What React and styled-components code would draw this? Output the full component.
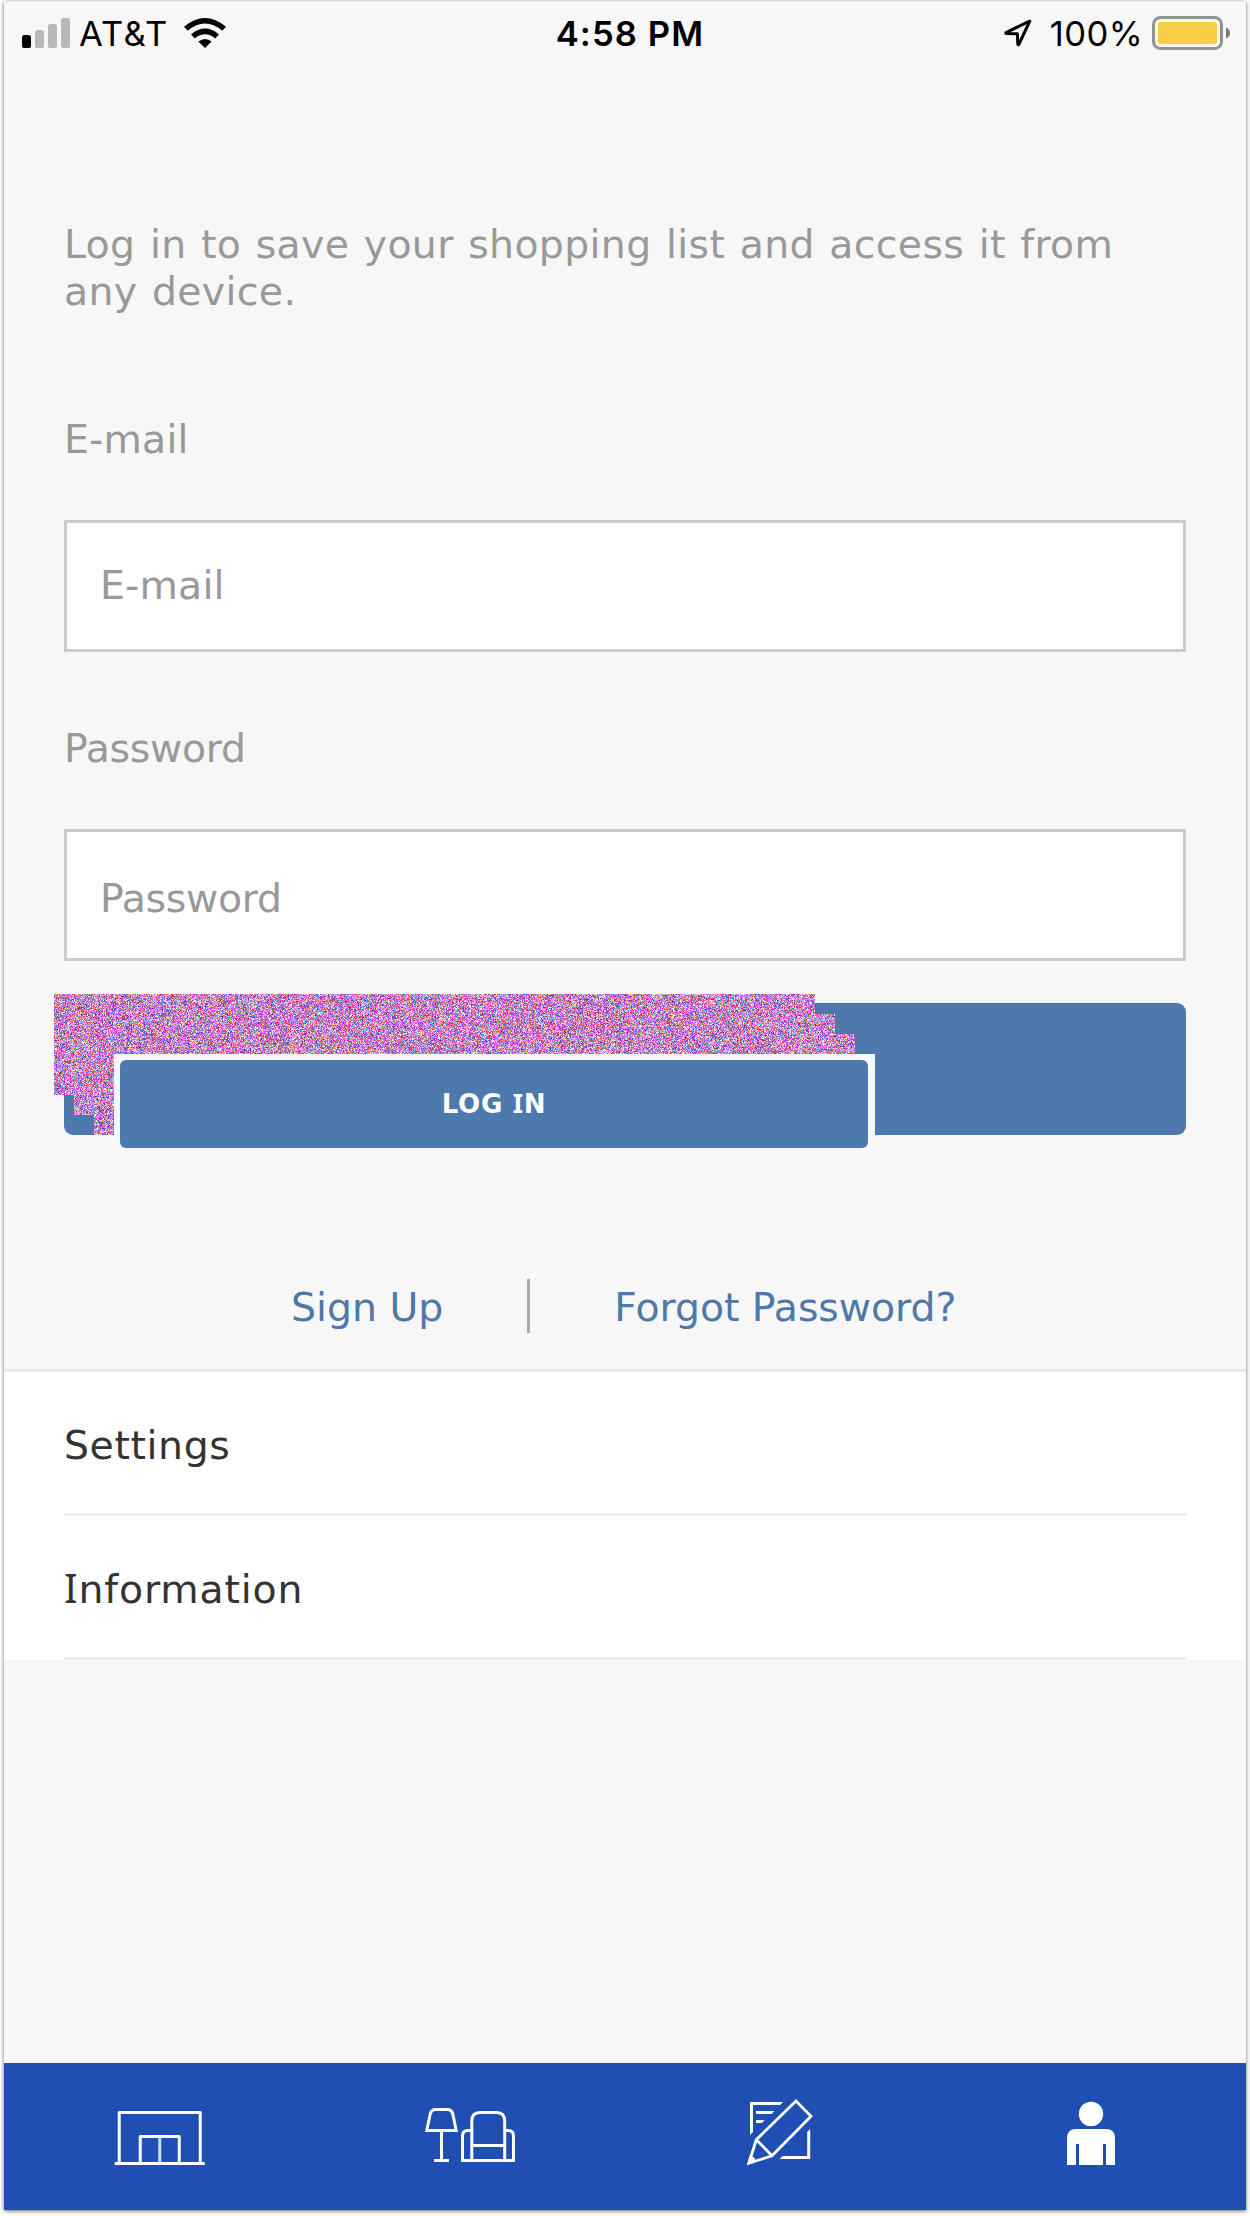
import React, { useEffect, useRef } from "react";
import styled, { createGlobalStyle } from "styled-components";

const GlobalStyle = createGlobalStyle`
  * { box-sizing: border-box; }
  body { margin: 0; background: #fff; }
`;

const sans = `"DejaVu Sans", Verdana, sans-serif`;
const system = `Inter, Roboto, sans-serif`;

const Page = styled.div`
  width: 1250px;
  height: 2216px;
  padding: 1px 4px 6px;
  overflow: hidden;
  background: #fff;
`;

const Screen = styled.main`
  display: flex;
  flex-direction: column;
  height: 2209px;
  background: #f7f7f7;
  border-top: 1px solid #ececec;
  box-shadow: 0 1px 4px rgba(0, 0, 0, 0.6);
  font-family: ${sans};
  font-size: 39.4px;
  line-height: 47px;
  color: #999;
  white-space: nowrap;
`;

const StatusBar = styled.header`
  display: grid;
  grid-template-columns: 1fr auto 1fr;
  align-items: center;
  height: 62px;
  padding: 0 16px 0 18px;
  font-family: ${system};
  font-size: 34.6px;
  line-height: 42px;
  color: #000;
`;

const StatusGroup = styled.div`
  display: flex;
  align-items: center;
  justify-content: ${(p) => (p.$end ? "flex-end" : "flex-start")};
`;

const Carrier = styled.span`
  margin: 0 15px 0 9px;
  letter-spacing: 1.2px;
`;

const Clock = styled.time`
  margin-left: 8px;
  font-weight: 600;
  letter-spacing: 1.1px;
`;

const Percent = styled.span`
  margin: 0 9px 0 18px;
  letter-spacing: 0.4px;
`;

const Form = styled.form`
  display: flex;
  flex-direction: column;
  height: 1305px;
  padding: 157px 60px 0;
`;

const Intro = styled.p`
  margin: 0 0 101px;
  letter-spacing: 0.35px;
  word-spacing: 1.6px;
`;

const Label = styled.label`
  height: 47px;
  margin-bottom: 57px;
  letter-spacing: ${(p) => p.$spacing}px;
`;

const Field = styled.div`
  display: flex;
  align-items: center;
  height: 132px;
  margin-bottom: ${(p) => p.$after}px;
  padding: ${(p) => p.$drop}px 33px ${(p) => p.$lift}px;
  border: 3px solid #ccc;
  background: #fff;
  letter-spacing: ${(p) => p.$spacing}px;
`;

const Submit = styled.div`
  position: relative;
  flex: none;
  height: 132px;
  border-radius: 9px;
  background: #4e79ad;
`;

const Grain = styled.canvas`
  position: absolute;
  left: -10px;
  top: -9px;
  width: 801px;
  height: 141px;
  clip-path: polygon(0 0, 761px 0, 761px 20px, 781px 20px, 781px 40px, 801px 40px,
    801px 60px, 60px 60px, 60px 141px, 40px 141px, 40px 121px, 20px 121px, 20px 101px, 0 101px);
`;

const Float = styled.div`
  position: absolute;
  left: 50px;
  top: 51px;
  width: 761px;
  height: 101px;
  padding: 6px 7px 7px 6px;
  background: #f7f8f9;
`;

const LoginButton = styled.button`
  display: block;
  width: 748px;
  height: 88px;
  padding: 0;
  border: 0;
  border-radius: 6px;
  background: #4e79ad;
  color: #fff;
  font: bold 26px/32px ${sans};
  letter-spacing: 0.7px;
`;

const SlabCapital = styled.span`
  font-family: "Noto Sans", sans-serif;
  font-size: 1.02em;
  line-height: 0;
`;

const Links = styled.nav`
  display: flex;
  align-items: center;
  height: 54px;
  margin-top: 144px;
  padding-left: 227px;
  color: #4f78aa;
`;

const Link = styled.a`
  padding-top: 2px;
  letter-spacing: ${(p) => p.$spacing}px;
`;

const Divider = styled.span`
  width: 3px;
  height: 54px;
  margin: 0 84px 0 84px;
  background: #aaa;
`;

const Menu = styled.section`
  display: flex;
  flex-direction: column;
  height: 291px;
  padding: 0 60px;
  border-top: 3px solid #e9e9e9;
  background: #fff;
  color: #333;
`;

const MenuItem = styled.div`
  height: 144px;
  padding-top: 50px;
  border-bottom: 3px solid #ededed;
  letter-spacing: ${(p) => p.$spacing}px;
`;

const TabBar = styled.footer`
  display: grid;
  grid-template-columns: repeat(4, 1fr);
  height: 147px;
  margin-top: auto;
  background: #204fb3;
`;

const Tab = styled.div`
  display: flex;
  justify-content: center;
  padding-top: 33px;
`;

const Glyph = styled.svg`
  display: block;
  flex: none;
  overflow: visible;
`;

function drawGrain(canvas) {
  const ctx = canvas.getContext("2d");
  const image = ctx.createImageData(canvas.width, canvas.height);
  let seed = 48271;
  const next = () => {
    seed = (Math.imul(seed, 1664525) + 1013904223) >>> 0;
    return seed / 4294967296;
  };
  for (let i = 0; i < image.data.length; i += 4) {
    const red = Math.min(255, 90 + next() * 240);
    const blue = Math.min(255, 95 + next() * 225);
    image.data[i] = red;
    image.data[i + 1] = Math.min(255, ((red + blue) / 2) * (0.24 + next() * 0.88));
    image.data[i + 2] = blue;
    image.data[i + 3] = 255;
  }
  ctx.putImageData(image, 0, 0);
}

function GrainPatch() {
  const ref = useRef(null);
  useEffect(() => drawGrain(ref.current), []);
  return <Grain ref={ref} width={801} height={141} />;
}

const Signal = () => (
  <Glyph width="48" height="30" viewBox="0 0 48 30">
    <rect x="0" y="17" width="9" height="13" rx="2.6" fill="#000" />
    <g fill="#b8b8b8">
      <rect x="13" y="12" width="9" height="18" rx="2.6" />
      <rect x="26" y="6" width="9" height="24" rx="2.6" />
      <rect x="39" y="0" width="9" height="30" rx="2.6" />
    </g>
  </Glyph>
);

const Wifi = () => (
  <Glyph width="42" height="30" viewBox="0 0 42 30">
    <path d="M21 30 L14.4 23.6 Q21 18.4 27.6 23.6 Z" />
    <path d="M7 16.4 Q21 4.6 35 16.4 L31.2 20.4 Q21 12.2 10.8 20.4 Z" />
    <path d="M0 8.8 Q21 -8.8 42 8.8 L38.2 12.7 Q21 -1.6 3.8 12.7 Z" />
  </Glyph>
);

const Arrow = () => (
  <Glyph width="28" height="28" viewBox="0 0 28 28">
    <path d="M25.8 2 L2 13.6 Q1.4 14.4 2.6 14.6 L13.4 14.8 L13.8 25.2 Q14.2 26.6 15 25.2 Z" fill="none" stroke="#000" strokeWidth="3" strokeLinejoin="round" />
  </Glyph>
);

const Battery = () => (
  <Glyph width="78" height="34" viewBox="0 0 78 34">
    <rect x="1.5" y="1.5" width="68" height="31" rx="7" fill="#fdf7e6" stroke="#929292" strokeWidth="3" />
    <rect x="6" y="6" width="59" height="22" rx="3" fill="#f7ce46" />
    <path d="M74 11.5 Q78 13.5 78 17 Q78 20.5 74 22.5 Z" fill="#777" />
  </Glyph>
);

const StoreIcon = () => (
  <Glyph width="90" height="69" viewBox="114.25 2096 90 69" fill="none" stroke="#fff" strokeWidth="3" strokeLinejoin="round">
    <path d="M119.5 2162V2112.5H200.5V2162M140.5 2162V2136.5H179.5V2162M115 2163.5H205" />
    <path d="M160 2138V2162" opacity=".8" />
  </Glyph>
);

const RoomIcon = () => (
  <Glyph width="90" height="69" viewBox="425 2096 90 69" fill="none" stroke="#fff" strokeWidth="3">
    <path d="M426.8 2130.5H456.2L452.8 2114Q451.6 2109.5 447.5 2109.5H435.5Q431.4 2109.5 430.2 2114ZM441.5 2132V2159M434 2160.5H449" />
    <path d="M471.8 2160.5V2121Q471.8 2112.5 480 2112.5H496.5Q504.7 2112.5 504.7 2121V2160.5M471.8 2145.4H504.7M471.8 2130.5H468Q462.5 2130.5 462.5 2136V2160.5H513.5V2136Q513.5 2130.5 508 2130.5H504.7" />
  </Glyph>
);

const PlanIcon = () => (
  <Glyph width="66" height="69" viewBox="748 2096 66 69">
    <g fill="#fff">
      <path d="M751 2102H784L781 2105H754V2132L751 2135Z" />
      <path d="M757 2111H775.4L772.5 2114H757ZM757 2120H765.6L763 2123H757Z" />
      <path d="M811.2 2129V2159H780.6L783.8 2156H808.2V2132Z" />
      <path d="M748 2165L751 2155L756 2158.5L754.8 2163Z" />
    </g>
    <path d="M757.4 2139.6L797 2101L812 2116.2L773 2155.8L749.8 2163.2ZM757.4 2139.6L773 2155.8" fill="none" stroke="#fff" strokeWidth="2.8" />
  </Glyph>
);

const PersonIcon = () => (
  <Glyph width="48" height="69" viewBox="1067 2096 48 69" fill="#fff">
    <circle cx="1091" cy="2114" r="12.2" />
    <path d="M1067 2165V2138Q1067 2129 1076 2129H1106Q1115 2129 1115 2138V2165H1106V2144H1103V2165H1079V2144H1076V2165Z" />
  </Glyph>
);

export default function App() {
  return (
    <Page>
      <GlobalStyle />
      <Screen>
        <StatusBar>
          <StatusGroup>
            <Signal />
            <Carrier>AT&amp;T</Carrier>
            <Wifi />
          </StatusGroup>
          <Clock>4:58 PM</Clock>
          <StatusGroup $end>
            <Arrow />
            <Percent>100%</Percent>
            <Battery />
          </StatusGroup>
        </StatusBar>
        <Form>
          <Intro>
            Log in to save your shopping list and access it from
            <br />
            any device.
          </Intro>
          <Label $spacing={0.2}>E-mail</Label>
          <Field $drop={0} $lift={2} $after={73} $spacing={0.2}>E-mail</Field>
          <Label $spacing={-0.3}>Password</Label>
          <Field $drop={6} $lift={0} $after={42} $spacing={-0.3}>Password</Field>
          <Submit>
            <GrainPatch />
            <Float>
              <LoginButton type="button">
                LOG <SlabCapital>I</SlabCapital>N
              </LoginButton>
            </Float>
          </Submit>
          <Links>
            <Link $spacing={0}>Sign Up</Link>
            <Divider />
            <Link $spacing={-0.05}>Forgot Password?</Link>
          </Links>
        </Form>
        <Menu>
          <MenuItem $spacing={0.6}>Settings</MenuItem>
          <MenuItem $spacing={0.85}>
            <SlabCapital>I</SlabCapital>nformation
          </MenuItem>
        </Menu>
        <TabBar>
          <Tab><StoreIcon /></Tab>
          <Tab><RoomIcon /></Tab>
          <Tab><PlanIcon /></Tab>
          <Tab><PersonIcon /></Tab>
        </TabBar>
      </Screen>
    </Page>
  );
}
